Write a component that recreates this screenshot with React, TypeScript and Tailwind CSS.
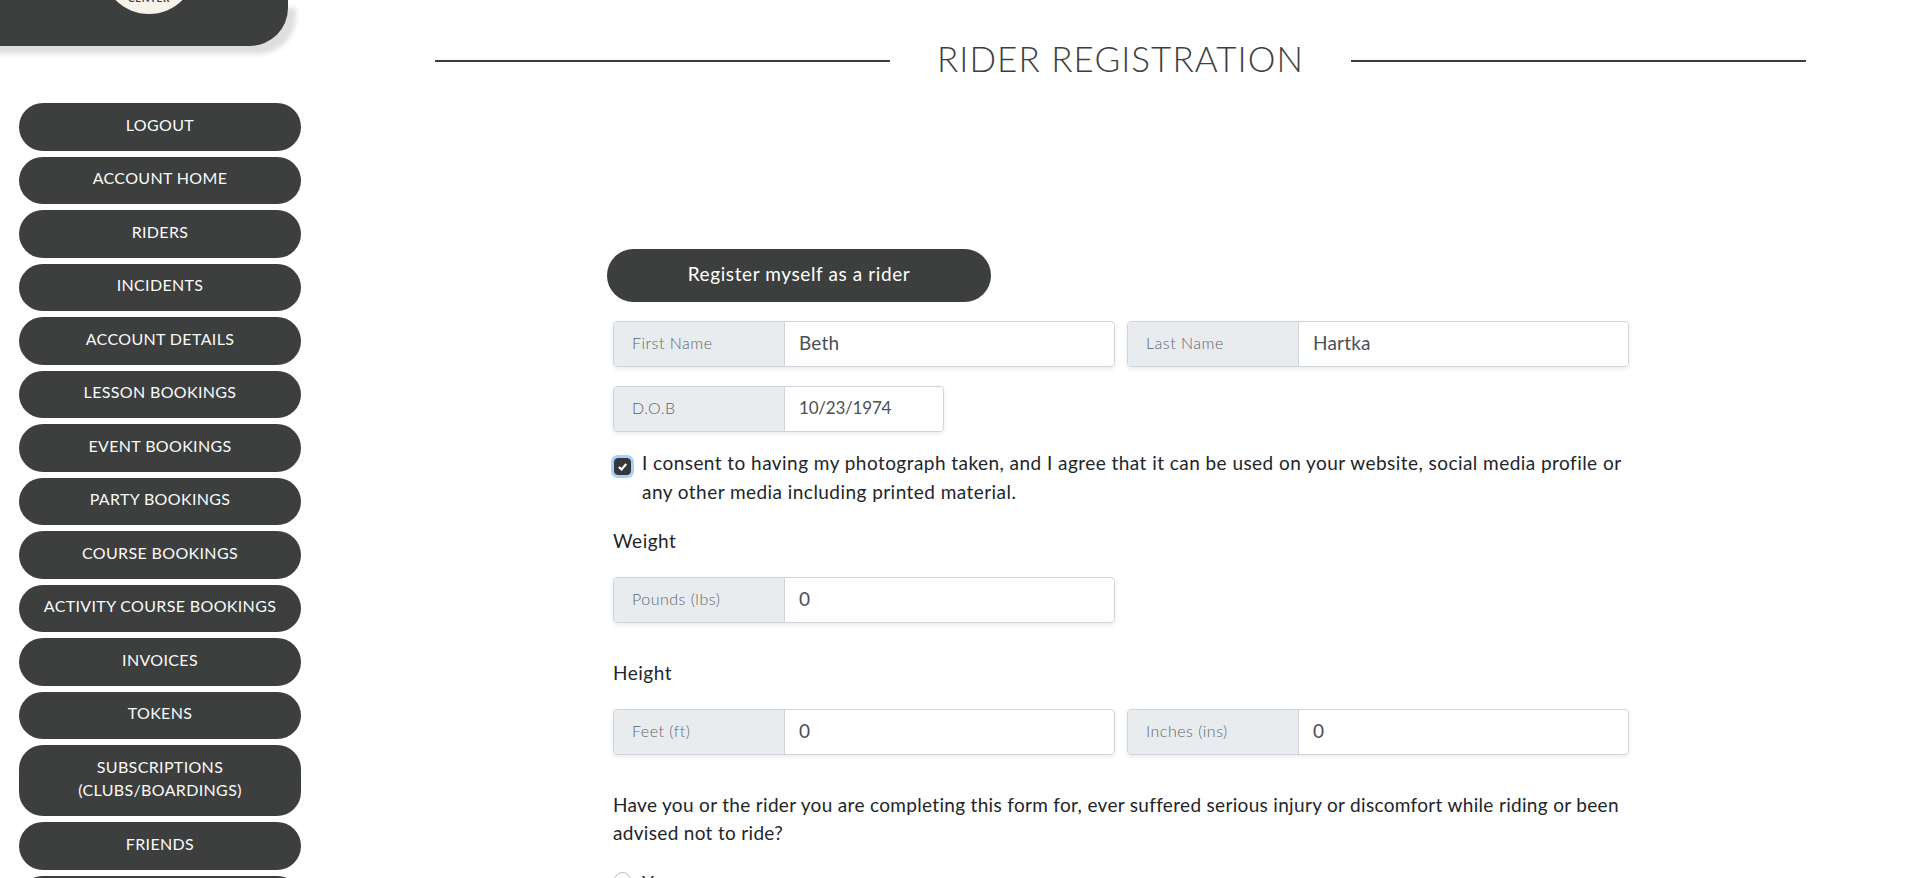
const nav: string[] = ["LOGOUT", "ACCOUNT HOME", "RIDERS", "INCIDENTS", "ACCOUNT DETAILS", "LESSON BOOKINGS", "EVENT BOOKINGS", "PARTY BOOKINGS", "COURSE BOOKINGS", "ACTIVITY COURSE BOOKINGS", "INVOICES", "TOKENS"];

function Field({ label, value, small }: { label: string; value: string; small?: boolean }) {
  return (
    <div className={`flex h-[46px] ${small ? "w-[331px]" : "w-[502px]"} rounded-[4px] border border-[#ced4da] shadow-[0_2px_4px_rgba(0,0,60,0.08)]`}>
      <div className="w-[171px] shrink-0 flex items-center pl-[18px] pb-[2px] bg-[#e9ecef] border-r border-[#ced4da] rounded-l-[4px] text-[#60656a] text-[16px] font-light tracking-[0.5px]">{label}</div>
      <div className={`flex-1 flex items-center pl-[14px] pb-[2px] bg-white rounded-r-[4px] text-[#495057] ${small ? "text-[17px] tracking-[-0.2px]" : "text-[19px] tracking-[0.2px]"}`}>{value}</div>
    </div>
  );
}

function NavBtn({ children, tall }: { children: React.ReactNode; tall?: boolean }) {
  return (
    <div className={`w-[282px] ${tall ? "h-[71px]" : "h-[47.5px]"} shrink-0 flex items-center justify-center text-center rounded-[24px] bg-[#3c3f3e] text-[#fafafa] text-[16px] leading-[23.3px] tracking-[0.35px] pb-[5px]`}>
      {children}
    </div>
  );
}

export default function App() {
  return (
    <div className="flex h-[878px] overflow-hidden bg-white font-['Lato','Liberation_Sans',sans-serif]">
      <aside className="w-[435px] shrink-0 flex flex-col">
        <div className="relative h-[46px] w-[308px] -ml-[20px] shrink-0 rounded-br-[38px] bg-[#3c3f3e] shadow-[8px_8px_5px_#dedede]">
          <div className="absolute left-[122px] top-[-80px] w-[94px] h-[94px] rounded-full bg-[#f8f3ea] flex items-end justify-center overflow-hidden">
            <span className="text-[10px] font-bold leading-[12px] tracking-[0.6px] text-[#3c3f3e] mb-[10px]">CENTER</span>
          </div>
        </div>
        <nav className="mt-[57px] ml-[19px] flex flex-col gap-[6px]">
          {nav.map((t) => <NavBtn key={t}>{t}</NavBtn>)}
          <NavBtn tall>SUBSCRIPTIONS<br />(CLUBS/BOARDINGS)</NavBtn>
          <NavBtn>FRIENDS</NavBtn>
          <NavBtn>&nbsp;</NavBtn>
        </nav>
      </aside>
      <main className="w-[1371px] shrink-0 pt-[22px]">
        <div className="flex items-center h-[81px] pb-[3px]">
          <div className="h-[2px] w-[455px] bg-[#3c3f3e]" />
          <h1 className="flex-1 text-center text-[#3c3f3e] text-[35px] font-light tracking-[1.05px] leading-none pb-[6px]">RIDER REGISTRATION</h1>
          <div className="h-[2px] w-[455px] bg-[#3c3f3e]" />
        </div>
        <div className="ml-[178px]">
          <div className="-ml-[6px] mt-[146px] w-[384px] h-[53px] rounded-[27px] bg-[#3c3f3e] text-white text-[19px] tracking-[0.6px] flex items-center justify-center pb-[2px]">Register myself as a rider</div>
          <div className="mt-[19px] flex gap-[12px]">
            <Field label="First Name" value="Beth" />
            <Field label="Last Name" value="Hartka" />
          </div>
          <div className="mt-[19px]"><Field label="D.O.B" value="10/23/1974" small /></div>
          <div className="mt-[16px] flex w-[1016px]">
            <div className="shrink-0 w-[29px] pt-[10px]">
              <div className="ml-[1px] w-[17px] h-[17px] rounded-[4px] bg-[#33383c] border border-[#33383c] shadow-[0_0_0_3px_#a9cffb] flex items-center justify-center">
                <svg viewBox="0 0 12 12" className="w-[11px] h-[11px]"><path d="M2 6.5 L5 9.2 L10 3.2" fill="none" stroke="#fff" strokeWidth="2.4" /></svg>
              </div>
            </div>
            <p className="text-[#212529] text-[19px] leading-[29px] tracking-[0.45px]">I consent to having my photograph taken, and I agree that it can be used on your website, social media profile or any other media including printed material.</p>
          </div>
          <p className="mt-[20px] text-[#212529] text-[19px] leading-[29px] tracking-[0.5px]">Weight</p>
          <div className="mt-[22px]"><Field label="Pounds (lbs)" value="0" /></div>
          <p className="mt-[35px] text-[#212529] text-[19px] leading-[29px] tracking-[0.5px]">Height</p>
          <div className="mt-[22px] flex gap-[12px]">
            <Field label="Feet (ft)" value="0" />
            <Field label="Inches (ins)" value="0" />
          </div>
          <p className="mt-[36px] w-[1016px] text-[#212529] text-[19px] leading-[28px] tracking-[0.32px]">Have you or the rider you are completing this form for, ever suffered serious injury or discomfort while riding or been advised not to ride?</p>
          <div className="mt-[21px] flex items-start">
            <div className="mt-[4px] ml-[1px] w-[17px] h-[17px] rounded-full border border-[#b5bac0] bg-white shrink-0" />
            <span className="ml-[11px] text-[#212529] text-[19px] leading-[29px]">Yes</span>
          </div>
        </div>
      </main>
    </div>
  );
}
